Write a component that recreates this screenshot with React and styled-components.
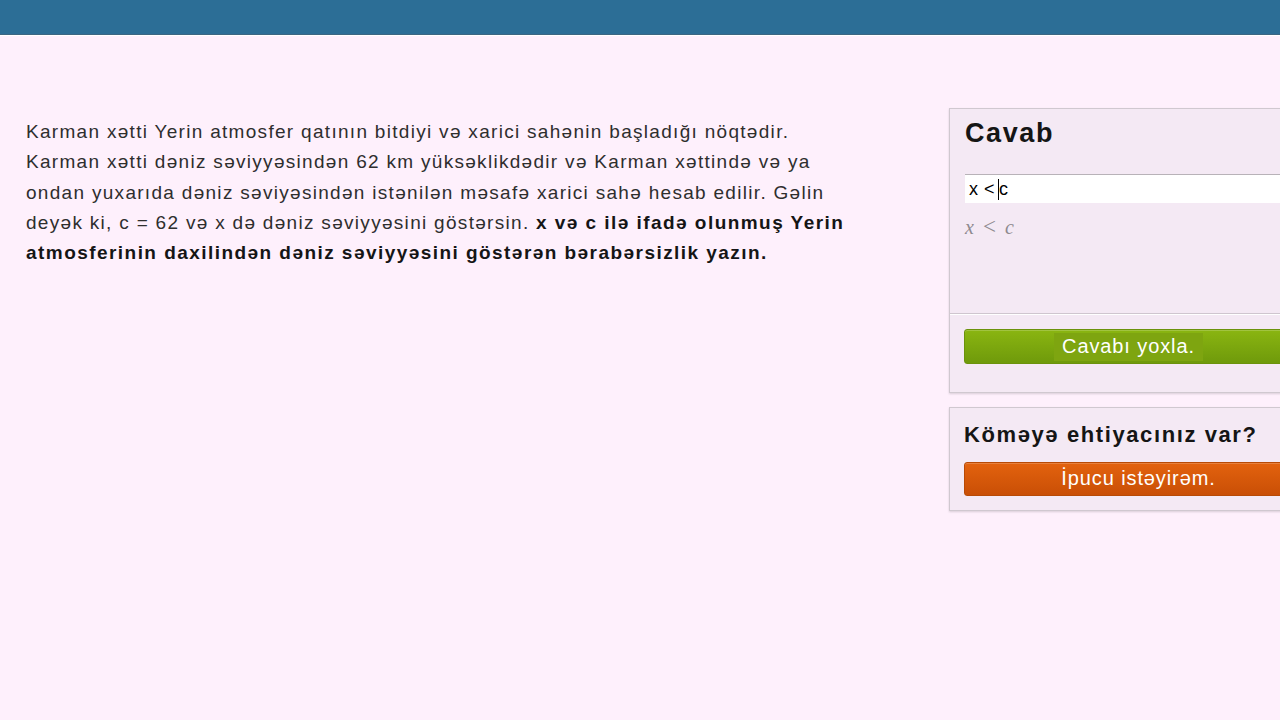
import React from 'react'
import styled, { createGlobalStyle } from 'styled-components';

const GlobalStyle = createGlobalStyle`
  html, body {
    margin: 0;
    padding: 0;
    background: #fef0fc;
    overflow: hidden;
  }
  body {
    font-family: "Liberation Sans", Arial, sans-serif;
  }
`;

const Page = styled.div`
  width: 1280px;
  height: 720px;
  overflow: hidden;
`;

const TopBar = styled.div`
  height: 34px;
  background-color: #2c6e96;
  border-bottom: 1px solid #3d6682;
  box-shadow: 0 1px 0 #ffffff;
`;

const Main = styled.div`
  display: flex;
  align-items: flex-start;
  padding-top: 73px;
`;

const Problem = styled.div`
  width: 832px;
  margin-left: 26px;
  margin-right: 91px;
  padding-top: 9px;
  flex-shrink: 0;
`;

const Text = styled.p`
  margin: 0;
  font-size: 19px;
  line-height: 30.3px;
  letter-spacing: 1.3px;
  color: #2e2e2e;

  strong {
    color: #151515;
    font-weight: bold;
    letter-spacing: 1.45px;
  }
`;

const Sidebar = styled.div`
  display: flex;
  flex-direction: column;
  gap: 14px;
  width: 360px;
  flex-shrink: 0;
`;

const Panel = styled.div`
  background: #f4e9f4;
  border: 1px solid #d0c8d0;
  box-shadow: 0 1px 2px rgba(0, 0, 0, 0.15);
`;

const Section = styled.div`
  padding: ${({ $pad }) => $pad || '0 15px'};
  border-top: ${({ $divide }) => ($divide ? '1px solid #cfc6cf' : 'none')};
  box-shadow: ${({ $divide }) => ($divide ? 'inset 0 1px 0 #ffffff' : 'none')};
`;

const Title = styled.h2`
  margin: 0;
  font-size: ${({ $size }) => $size || '27px'};
  letter-spacing: ${({ $ls }) => $ls || '1.6px'};
  font-weight: bold;
  color: #151515;
  line-height: 1.2;
`;

const Input = styled.div`
  height: 28px;
  background: #ffffff;
  border-top: 1px solid #b8b2b8;
  margin-top: 25px;
  display: flex;
  align-items: center;
  padding-left: 4px;
  font-size: 18px;
  letter-spacing: 0.5px;
  color: #000;
`;

const Caret = styled.span`
  display: inline-block;
  width: 1px;
  height: 21px;
  background: #000;
  margin: 0 0 0 3px;
`;

const Preview = styled.div`
  font-family: "Liberation Serif", "Times New Roman", serif;
  font-style: italic;
  font-size: 20px;
  color: #8f8a8f;
  margin-top: 11px;
  height: 99px;
  display: flex;
  align-items: baseline;
  gap: 9px;
`;

const Rel = styled.span`
  font-style: normal;
  font-size: 23px;
`;

const Button = styled.div`
  box-sizing: border-box;
  height: ${({ $h }) => $h || '35px'};
  margin-top: ${({ $top }) => $top || '0'};
  border-radius: 3px;
  display: flex;
  align-items: center;
  justify-content: center;
  color: #ffffff;
  font-size: 20px;
  letter-spacing: 0.9px;
  background: ${({ $kind }) =>
    $kind === 'hint'
      ? 'linear-gradient(#e3620e, #c94f06)'
      : 'linear-gradient(#8ab511, #6f9a0b)'};
  border: 1px solid ${({ $kind }) => ($kind === 'hint' ? '#b84a05' : '#6b920c')};
  box-shadow: inset 0 1px 0 rgba(255, 255, 255, 0.2);
`;

const Label = styled.span`
  padding: 2px 8px 3px;
  margin-left: ${({ $shift }) => $shift || '0'};
  background: ${({ $bg }) => $bg || 'transparent'};
`;

const App = () => {
  return (
    <Page>
      <GlobalStyle />
      <TopBar />
      <Main>
        <Problem>
          <Text>
            Karman xətti Yerin atmosfer qatının bitdiyi və xarici sahənin başladığı nöqtədir.
            Karman xətti dəniz səviyyəsindən 62 km yüksəklikdədir və Karman xəttində və ya
            ondan yuxarıda dəniz səviyəsindən istənilən məsafə xarici sahə hesab edilir. Gəlin
            deyək ki, c = 62 və x də dəniz səviyyəsini göstərsin.{' '}
            <strong>
              x və c ilə ifadə olunmuş Yerin atmosferinin daxilindən dəniz səviyyəsini göstərən
              bərabərsizlik yazın.
            </strong>
          </Text>
        </Problem>
        <Sidebar>
          <Panel>
            <Section $pad="8px 15px 0 15px">
              <Title>Cavab</Title>
              <Input>
                x &lt;<Caret />c
              </Input>
              <Preview>
                <span>x</span>
                <Rel>&lt;</Rel>
                <span>c</span>
              </Preview>
            </Section>
            <Section $divide $pad="15px 15px 28px 14px">
              <Button>
                <Label $bg="#7ea510">Cavabı yoxla.</Label>
              </Button>
            </Section>
          </Panel>
          <Panel>
            <Section $pad="14px 15px 14px 14px">
              <Title $size="22px" $ls="1.6px">Köməyə ehtiyacınız var?</Title>
              <Button $kind="hint" $h="34px" $top="13px">
                <Label $shift="20px">İpucu istəyirəm.</Label>
              </Button>
            </Section>
          </Panel>
        </Sidebar>
      </Main>
    </Page>
  )
}

export default App
